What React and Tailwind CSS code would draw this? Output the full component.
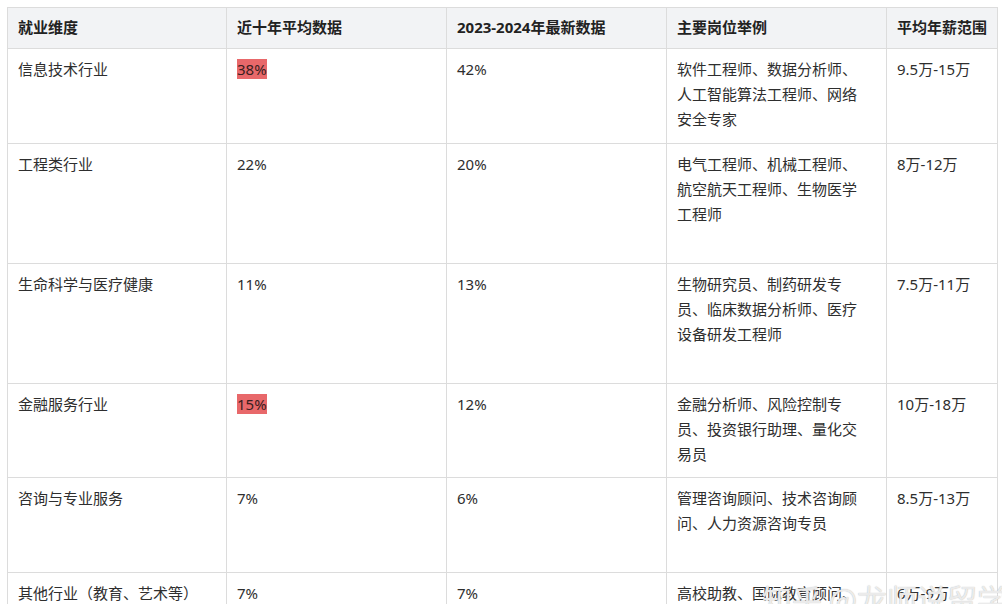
import React from 'react';

const headers = ['就业维度', '近十年平均数据', '2023-2024年最新数据', '主要岗位举例', '平均年薪范围'];

const rows = [
    { h: 'h-[95px]', dim: '信息技术行业', avg: '38%', hot: true, latest: '42%', jobs: ['软件工程师、数据分析师、', '人工智能算法工程师、网络', '安全专家'], pay: '9.5万-15万' },
    { h: 'h-[120px]', dim: '工程类行业', avg: '22%', latest: '20%', jobs: ['电气工程师、机械工程师、', '航空航天工程师、生物医学', '工程师'], pay: '8万-12万' },
    { h: 'h-[120px]', dim: '生命科学与医疗健康', avg: '11%', latest: '13%', jobs: ['生物研究员、制药研发专', '员、临床数据分析师、医疗', '设备研发工程师'], pay: '7.5万-11万' },
    { h: 'h-[94px]', dim: '金融服务行业', avg: '15%', hot: true, latest: '12%', jobs: ['金融分析师、风险控制专', '员、投资银行助理、量化交', '易员'], pay: '10万-18万' },
    { h: 'h-[95px]', dim: '咨询与专业服务', avg: '7%', latest: '6%', jobs: ['管理咨询顾问、技术咨询顾', '问、人力资源咨询专员'], pay: '8.5万-13万' },
    { h: 'h-[95px]', dim: '其他行业（教育、艺术等）', avg: '7%', latest: '7%', jobs: ['高校助教、国际教育顾问、'], pay: '6万-9万' },
];

const App = () => {
    return (
        <div className="w-[1002px] h-[604px] overflow-hidden bg-white relative" style={{ fontFamily: '"Noto Sans", "Noto Sans CJK SC", sans-serif' }}>
            <div className="pt-[7px] pl-[7px]">
                <table className="border-collapse table-fixed w-[991px] text-[15px] leading-[25px] text-[#2e2e2e]">
                    <colgroup>
                        <col className="w-[219px]" />
                        <col className="w-[220px]" />
                        <col className="w-[220px]" />
                        <col className="w-[220px]" />
                        <col className="w-[111px]" />
                    </colgroup>
                    <thead>
                        <tr className="h-[41px] bg-[#f2f3f5]">
                            {headers.map((t) => (
                                <th key={t} className="border border-[#dcdcdc] px-[10px] pb-[2px] text-left font-bold text-[#222] whitespace-nowrap align-middle">{t}</th>
                            ))}
                        </tr>
                    </thead>
                    <tbody>
                        {rows.map((r) => (
                            <tr key={r.dim} className={r.h}>
                                <td className="border border-[#dcdcdc] px-[10px] pt-[8px] align-top whitespace-nowrap">{r.dim}</td>
                                <td className="border border-[#dcdcdc] px-[10px] pt-[8px] align-top">
                                    {r.hot ? <span className="bg-[#e8686a] text-[#3a2020]">{r.avg}</span> : r.avg}
                                </td>
                                <td className="border border-[#dcdcdc] px-[10px] pt-[8px] align-top">{r.latest}</td>
                                <td className="border border-[#dcdcdc] px-[10px] pt-[8px] align-top">
                                    {r.jobs.map((l) => <div key={l} className="whitespace-nowrap">{l}</div>)}
                                </td>
                                <td className="border border-[#dcdcdc] px-[10px] pt-[8px] align-top whitespace-nowrap">{r.pay}</td>
                            </tr>
                        ))}
                    </tbody>
                </table>
            </div>
            <div className="absolute left-[762px] top-[576px] text-[30px] text-white/75 whitespace-nowrap [text-shadow:0_0_1px_#aaa]" style={{ fontFamily: '"Noto Sans CJK SC", sans-serif' }}>
                知乎 @龙师说留学
            </div>
        </div>
    );
};

export default App;
